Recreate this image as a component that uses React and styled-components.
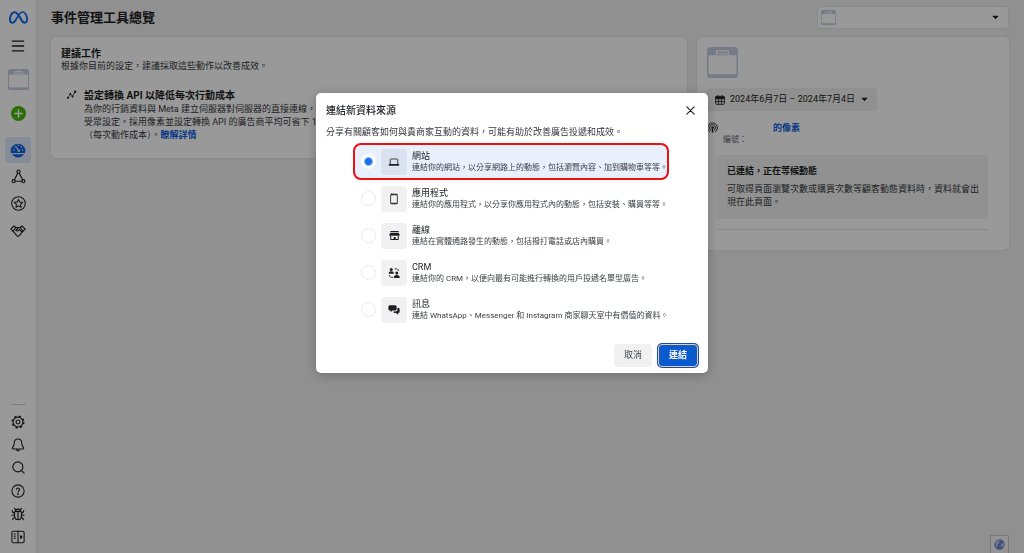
import React, { useState } from 'react';
import styled, { createGlobalStyle } from 'styled-components';
import { FaMeta } from 'react-icons/fa6';
import { Search } from 'lucide-react';

const GlobalStyle = createGlobalStyle`
  * {
    box-sizing: border-box;
  }

  body {
    margin: 0;
    background: #f0f0f0;
    color: #1c1e21;
    font-family: Roboto, 'Noto Sans CJK TC', sans-serif;
    font-size: 9px;
    line-height: 13px;
  }

  button,
  input {
    font: inherit;
    color: inherit;
    margin: 0;
  }

  h1, h2, h3, p {
    margin: 0;
  }

  svg {
    display: block;
    flex-shrink: 0;
  }
`;

const Page = styled.div`
  display: flex;
  min-height: 100vh;
`;

const Sidebar = styled.nav`
  display: flex;
  flex-direction: column;
  align-items: center;
  width: 36px;
  padding: 4px 0 5px;
  background: #fff;
  box-shadow: 1px 0 1px #e2e3e5;
`;

const NavButton = styled.button`
  display: flex;
  align-items: center;
  justify-content: center;
  width: 26px;
  height: ${({ $height }) => $height || 27}px;
  padding: 0;
  border: none;
  border-radius: 4px;
  background: ${({ $active }) => ($active ? '#dfeafc' : 'none')};
  cursor: pointer;
`;

const NavGroup = styled.div`
  display: flex;
  flex-direction: column;
  align-items: center;
  margin-top: ${({ $bottom }) => ($bottom ? 'auto' : '7px')};
`;

const NavLine = styled.hr`
  width: 15px;
  margin: 0 0 5px;
  border: none;
  border-top: 1px solid #d0d2d5;
`;

const Main = styled.main`
  flex: 1;
  min-width: 0;
  padding: 6px 15px;
`;

const Header = styled.header`
  display: flex;
  align-items: center;
  justify-content: space-between;
  height: 23px;
  margin-bottom: 8px;
`;

const PageTitle = styled.h1`
  font-size: 13px;
  line-height: 18px;
  font-weight: 700;
`;

const AccountSelect = styled.button`
  display: flex;
  align-items: center;
  justify-content: space-between;
  width: 192px;
  height: 23px;
  padding: 0 9px 0 3px;
  border: 1px solid #e4e6e9;
  border-radius: 4px;
  background: #fff;
`;

const Columns = styled.div`
  display: grid;
  grid-template-columns: minmax(0, 1fr) 312px;
  align-items: start;
  gap: 10px;
`;

const Card = styled.section`
  padding: 10px;
  border-radius: 5px;
  background: #fff;
  box-shadow: 0 0 2px rgba(0, 0, 0, 0.16);
`;

const CardTitle = styled.h2`
  font-size: 10px;
  line-height: 13px;
  font-weight: 700;
`;

const BodyText = styled.p`
  color: #33373b;
`;

const Task = styled.article`
  display: flex;
  gap: 7px;
  padding: 16px 5px 6px;
`;

const TaskText = styled(BodyText)`
  margin-top: 1px;
  white-space: nowrap;
`;

const Link = styled.a`
  color: #0a5fe0;
  font-weight: 700;
  text-decoration: none;
`;

const DateButton = styled.button`
  display: flex;
  align-items: center;
  gap: 5px;
  height: 23px;
  margin: 10px 0 11px;
  padding: 0 9px 0 8px;
  border: none;
  border-radius: 4px;
  background: #f0f0f0;
  white-space: nowrap;

  svg:last-child {
    margin-left: 1px;
  }
`;

const PixelRow = styled.div`
  display: flex;
  gap: 5px;
`;

const PixelName = styled.div`
  padding-left: 50px;
`;

const PixelId = styled.div`
  font-size: 8px;
  line-height: 10px;
  color: #606468;
`;

const StatusBox = styled.div`
  margin: 10px 11px 10px 10px;
  padding: 10px 8px 10px 10px;
  border-radius: 4px;
  background: #f2f2f2;
`;

const StatusTitle = styled.h3`
  margin-bottom: 5px;
  font-size: 9px;
  font-weight: 700;
`;

const Divider = styled.hr`
  margin: 0 11px 10px 10px;
  border: none;
  border-top: 1px solid #e2e3e5;
`;

const Globe = styled.button`
  position: fixed;
  right: 15px;
  bottom: 0;
  display: flex;
  align-items: center;
  justify-content: center;
  width: 19px;
  height: 18px;
  padding: 0;
  border: 1px solid #c8cacd;
  border-bottom: none;
  background: #f5f6f7;
`;

const Overlay = styled.div`
  position: fixed;
  inset: 0;
  display: flex;
  align-items: flex-start;
  justify-content: center;
  padding-top: 93px;
  background: rgba(0, 0, 0, 0.4);
`;

const Dialog = styled.form`
  width: 392px;
  padding: 10px 10px 6px;
  border-radius: 5px;
  background: #fff;
  box-shadow: 0 2px 12px rgba(0, 0, 0, 0.25);
`;

const DialogHeader = styled.div`
  display: flex;
  align-items: center;
  justify-content: space-between;
  margin-bottom: 8px;
`;

const DialogTitle = styled.h2`
  font-size: 10px;
  line-height: 13px;
  font-weight: 500;
`;

const CloseButton = styled.button`
  display: flex;
  padding: 3px;
  border: none;
  background: none;
  cursor: pointer;
`;

const OptionList = styled.div`
  margin: 4px 29px 16px 27px;
`;

const Option = styled.label`
  display: flex;
  align-items: center;
  height: 37px;
  padding-left: 8px;
  border-radius: 8px;
  background: ${({ $selected }) => ($selected ? '#e8effd' : 'none')};
  outline: ${({ $selected }) => ($selected ? '2px solid #ee1111' : 'none')};
  outline-offset: -2px;
  cursor: pointer;
`;

const Radio = styled.input`
  appearance: none;
  width: 15px;
  height: 15px;
  border: 1px solid #e8eaec;
  border-radius: 50%;
  background: #fff;

  &:checked {
    border-color: #fff;
    background: radial-gradient(circle, #1771ed 3px, #fff 5px);
  }
`;

const OptionIcon = styled.span`
  display: flex;
  align-items: center;
  justify-content: center;
  width: 26px;
  height: 26px;
  margin: 0 5px;
  border-radius: 4px;
  background: ${({ $selected }) => ($selected ? '#dae2f1' : '#f1f1f1')};
`;

const OptionText = styled.span`
  display: flex;
  flex-direction: column;
  white-space: nowrap;
  line-height: 12px;
`;

const OptionHint = styled.small`
  font-size: 8px;
  line-height: 11px;
  color: #3a3e42;
`;

const Footer = styled.div`
  display: flex;
  justify-content: flex-end;
  gap: 6px;
`;

const Button = styled.button`
  height: 23px;
  padding: 0 10px;
  border: none;
  border-radius: 4px;
  background: #f1f1f1;
  color: #44484c;
  cursor: pointer;
`;

const PrimaryButton = styled(Button)`
  border: 1px solid #f2cf8c;
  background: #0a5bd0;
  color: #fff;
  font-weight: 700;
  box-shadow: 0 0 0 1px #0a4bd0;
`;

const Icon = ({ size = 14, children, ...rest }) => (
  <svg
    width={size}
    height={size}
    viewBox="0 0 16 16"
    fill="none"
    stroke="currentColor"
    strokeWidth="1.2"
    strokeLinecap="round"
    strokeLinejoin="round"
    aria-hidden="true"
    {...rest}
  >
    {children}
  </svg>
);

const Briefcase = ({ size }) => (
  <svg width={size} height={size} viewBox="0 0 32 32" aria-hidden="true">
    <rect width="32" height="32" rx="4" fill="#c3cbe2" />
    <path d="M1.500 8.500h29V27q0 1-1 1h-27q-1 0-1-1z" fill="#fff" />
    <path d="M10 8.500V4h12v4.500" fill="none" stroke="#fff" strokeWidth="1.500" />
    <path d="M11 7h10" stroke="#fff" strokeWidth="1" />
  </svg>
);

const Caret = () => (
  <svg width="7" height="5" viewBox="0 0 8 5" aria-hidden="true">
    <path d="M1 .5h6q.7 0 .2.6L4.500 4q-.5.5-1 0L.8 1.100Q.3.500 1 .5z" fill="currentColor" />
  </svg>
);

const GaugeIcon = () => (
  <svg width="16" height="16" viewBox="0 0 16 16" aria-hidden="true">
    <path d="M1 11a7.300 7.300 0 1 1 14 0z" fill="#0a64e0" />
    <path d="M1.900 12.200h12.200a7.400 7.400 0 0 1-12.200 0z" fill="#0a64e0" />
    <g fill="#dfeafc">
      <circle cx="3.600" cy="8" r=".8" />
      <circle cx="5" cy="4.700" r=".8" />
      <circle cx="8.200" cy="3.200" r=".8" />
      <circle cx="11.300" cy="4.700" r=".8" />
      <circle cx="12.600" cy="8" r=".8" />
      <circle cx="8.800" cy="8.700" r="1.300" />
    </g>
    <path d="M8.600 8.400 6.200 5.200" stroke="#dfeafc" strokeWidth="1.100" strokeLinecap="round" />
  </svg>
);

const PlusIcon = () => (
  <svg width="15" height="15" viewBox="0 0 16 16" aria-hidden="true">
    <circle cx="8" cy="8" r="8" fill="#45b80c" />
    <path d="M8 4v8M4 8h8" stroke="#fff" strokeWidth="1.600" strokeLinecap="round" />
  </svg>
);

const NodesIcon = () => (
  <Icon size={15}>
    <circle cx="8" cy="2.800" r="1.700" />
    <circle cx="2.800" cy="13" r="1.700" />
    <circle cx="13.200" cy="13" r="1.700" />
    <path d="M7.200 4.400 3.600 11.400M8.800 4.400l3.600 7M4.600 13h6.800" />
  </Icon>
);

const StarIcon = () => (
  <Icon size={15} strokeWidth="1.100">
    <circle cx="8" cy="8" r="7.200" />
    <path d="m8 3.600 1.350 2.750 3.050.45-2.200 2.150.5 3.050L8 10.550 5.300 12l.5-3.050L3.600 6.800l3.050-.45z" />
  </Icon>
);

const HandshakeIcon = () => (
  <Icon size={16} strokeWidth="1.100">
    <path d="M.8 6.200 4 3l2 1.500-3 3.700zM15.200 6.200 12 3l-2 1.500 3 3.700z" />
    <path d="M6 4.500h4M3 8.200l4 4.600q1 .9 2 0l4-4.600M8.600 4.500 6 7.100q.8 1.300 2.400.3l1-.9 2.800 2.800" />
  </Icon>
);

const GearIcon = () => (
  <Icon>
    <circle cx="8" cy="8" r="5.600" />
    <circle cx="8" cy="8" r="2.200" />
    <circle cx="8" cy="8" r="6.700" strokeWidth="1.500" strokeDasharray="2.630 2.630" strokeLinecap="butt" />
  </Icon>
);

const BellIcon = () => (
  <Icon>
    <path d="M8 1.200c-3 0-4.300 2-4.300 4.600 0 3-.9 4-2 5.200-.6.700-.2 1.500.6 1.500h11.400c.8 0 1.200-.8.600-1.500-1.100-1.200-2-2.200-2-5.200 0-2.600-1.300-4.600-4.300-4.600zM6.200 12.800q.4 2 1.800 2t1.800-2" />
  </Icon>
);

const HelpIcon = () => (
  <Icon>
    <circle cx="8" cy="8" r="7" />
    <path d="M6.100 6.300q.2-1.800 2-1.800 1.800.1 1.800 1.700 0 1-1 1.500-.9.500-.9 1.400" />
    <circle cx="8" cy="11.300" r=".4" fill="currentColor" />
  </Icon>
);

const BugIcon = () => (
  <Icon strokeWidth="1.300">
    <path d="M5.200 5q.2-2.600 2.800-2.600T10.800 5M4 5.500q4-1.200 8 0v4.700q0 4.300-4 4.300t-4-4.300zM8 5.200v9" />
    <path d="M5.200 3 4 1.500M10.800 3 12 1.500M4 7.200 1.800 5.800 1.500 4.200M12 7.200l2.200-1.400.3-1.600M4 9.400H1M12 9.400h3M4.400 11.700 2.300 13 2 14.500M11.600 11.700l2.100 1.300.3 1.500" />
  </Icon>
);

const PanelIcon = () => (
  <Icon>
    <rect x="1" y="1.500" width="14" height="13" rx="1.600" />
    <path d="M8 1.500v13" />
    <path d="M3.400 4.600h1.800M3.400 7h1.800M3.400 9.400h1.800" strokeWidth="1" />
    <path d="m11 6.500 1.600 1.500L11 9.500z" fill="currentColor" />
  </Icon>
);

const SparkIcon = () => (
  <Icon size={11}>
    <path d="m3 12.500 3.500-5 3 3L13 4.500" strokeDasharray="2.500 1" />
    <g fill="currentColor" stroke="none">
      <circle cx="2.800" cy="12.700" r="1.500" />
      <circle cx="6.300" cy="7.300" r="1.500" />
      <circle cx="9.600" cy="11" r="1.500" />
      <circle cx="13.300" cy="4" r="1.700" />
    </g>
  </Icon>
);

const CalendarIcon = () => (
  <Icon size={10} strokeWidth="1.300">
    <rect x="1" y="2" width="14" height="13" rx="2" />
    <path d="M1 3h14v3H1z" fill="currentColor" />
    <path d="M4.500.8v2M11.500.8v2M1 10.500h14M5.700 6v9M10.300 6v9" />
  </Icon>
);

const BroadcastIcon = () => (
  <Icon size={11} strokeWidth="1.400">
    <path d="M4 14.500A7.200 7.200 0 1 1 12 14.500M5 11.500a4.300 4.300 0 1 1 6 0" />
    <circle cx="8" cy="8.300" r="1.300" fill="currentColor" />
    <path d="M8 11.500v3" strokeWidth="2.300" />
  </Icon>
);

const LaptopIcon = () => (
  <Icon size={12}>
    <path d="M3 11V5q0-1 1-1h8q1 0 1 1v6" strokeWidth="1.100" />
    <path d="M1 10.500h14v1.300q0 1.200-1.200 1.200H2.200Q1 13 1 11.800z" fill="currentColor" stroke="none" />
  </Icon>
);

const PhoneIcon = () => (
  <Icon size={12}>
    <rect x="3.500" y="1.500" width="9" height="13" rx="1.500" strokeWidth="1.100" />
    <path d="M4 2.300h8M4 13.700h8" strokeWidth="1.500" />
  </Icon>
);

const StoreIcon = () => (
  <Icon size={11} stroke="none" fill="currentColor">
    <path d="M2 1.500h12v1.800H2zM1.500 4.300h13l1 3.200q0 1-1 1h-13q-1 0-1-1z" />
    <path d="M1.800 8h1.400v5h3.600v-3h3v3h3V8h1.400v5.500q0 1-1 1H2.800q-1 0-1-1z" />
  </Icon>
);

const PeopleIcon = () => (
  <Icon size={12} stroke="none" fill="currentColor">
    <circle cx="4.300" cy="3.200" r="2" />
    <path d="M.8 9q0-3.300 3.500-3.300T7.800 9z" />
    <circle cx="11.700" cy="8" r="2" />
    <path d="M7.700 14.500q0-3.800 4-3.800t4 3.800z" />
    <path d="M9.500 2.500q3.500-.8 4.500 2.500M6 13.800Q3 14.500 2 11.300" fill="none" stroke="currentColor" strokeDasharray="2 1.500" />
  </Icon>
);

const ChatIcon = () => (
  <Icon size={12} stroke="none" fill="currentColor">
    <path d="M2.500 1.500h7q2 0 2 2v3.300q0 2-2 2H6L3.500 11V8.800H2.500q-2 0-2-2V3.500q0-2 2-2z" />
    <path d="M12.600 5h.9q2 0 2 2v3q0 2-2 2v2.500L10.800 12H9q-1.800 0-2-2h3q2.600 0 2.600-2.700z" />
  </Icon>
);

const CloseIcon = () => (
  <Icon size={9} strokeWidth="2">
    <path d="m1.500 1.500 13 13M14.500 1.500l-13 13" />
  </Icon>
);

const GlobeIcon = () => (
  <svg width="11" height="11" viewBox="0 0 16 16" aria-hidden="true">
    <circle cx="8" cy="8" r="7.500" fill="#6385cc" />
    <path d="M2 4q3-3.500 6-3l1 2-2 1 1 2-3 2 1 3-2 1Q1 9 2 4zM10 7l4-2 1 4-3 4-2-2z" fill="#b4c2e0" />
  </svg>
);

const options = [
  { id: 'web', title: '網站', hint: '連結你的網站，以分享網路上的動態，包括瀏覽內容、加到購物車等等。', icon: LaptopIcon },
  { id: 'app', title: '應用程式', hint: '連結你的應用程式，以分享你應用程式內的動態，包括安裝、購買等等。', icon: PhoneIcon },
  { id: 'offline', title: '離線', hint: '連結在實體通路發生的動態，包括撥打電話或店內購買。', icon: StoreIcon },
  { id: 'crm', title: 'CRM', hint: '連結你的 CRM，以便向最有可能進行轉換的用戶投遞名單型廣告。', icon: PeopleIcon },
  { id: 'message', title: '訊息', hint: '連結 WhatsApp、Messenger 和 Instagram 商家聊天室中有價值的資料。', icon: ChatIcon }
];

const ConnectDialog = () => {
  const [source, setSource] = useState('web');

  return (
    <Overlay>
      <Dialog role="dialog" aria-labelledby="dialog-title" onSubmit={(e) => e.preventDefault()}>
        <DialogHeader>
          <DialogTitle id="dialog-title">連結新資料來源</DialogTitle>
          <CloseButton type="button" aria-label="關閉">
            <CloseIcon />
          </CloseButton>
        </DialogHeader>
        <BodyText>分享有關顧客如何與貴商家互動的資料，可能有助於改善廣告投遞和成效。</BodyText>

        <OptionList>
          {options.map(({ id, title, hint, icon: OptionGlyph }) => (
            <Option key={id} $selected={source === id}>
              <Radio
                type="radio"
                name="source"
                value={id}
                checked={source === id}
                onChange={() => setSource(id)}
              />
              <OptionIcon $selected={source === id}>
                <OptionGlyph />
              </OptionIcon>
              <OptionText>
                {title}
                <OptionHint>{hint}</OptionHint>
              </OptionText>
            </Option>
          ))}
        </OptionList>

        <Footer>
          <Button type="button">取消</Button>
          <PrimaryButton type="submit">連結</PrimaryButton>
        </Footer>
      </Dialog>
    </Overlay>
  );
};

const App = () => (
  <>
    <GlobalStyle />
    <Page lang="zh-Hant">
      <Sidebar>
        <NavButton aria-label="Meta"><FaMeta size={19} color="#0a6cf0" /></NavButton>
        <NavButton aria-label="選單" $height={30}>
          <Icon><path d="M1.500 2.500h13M1.500 8h13M1.500 13.500h13" strokeWidth="1.500" /></Icon>
        </NavButton>
        <NavButton aria-label="帳號" $height={36}><Briefcase size={21} /></NavButton>
        <NavButton aria-label="建立" $height={33}><PlusIcon /></NavButton>
        <NavGroup>
          <NavButton aria-label="總覽" $active $height={26}><GaugeIcon /></NavButton>
          <NavButton aria-label="資料集"><NodesIcon /></NavButton>
          <NavButton aria-label="自訂轉換"><StarIcon /></NavButton>
          <NavButton aria-label="合作夥伴"><HandshakeIcon /></NavButton>
        </NavGroup>
        <NavGroup $bottom>
          <NavLine />
          <NavButton aria-label="設定" $height={23}><GearIcon /></NavButton>
          <NavButton aria-label="通知" $height={23}><BellIcon /></NavButton>
          <NavButton aria-label="搜尋" $height={23}><Search size={15} strokeWidth={1.8} /></NavButton>
          <NavButton aria-label="說明" $height={23}><HelpIcon /></NavButton>
          <NavButton aria-label="回報問題" $height={23}><BugIcon /></NavButton>
          <NavButton aria-label="展開" $height={23}><PanelIcon /></NavButton>
        </NavGroup>
      </Sidebar>

      <Main>
        <Header>
          <PageTitle>事件管理工具總覽</PageTitle>
          <AccountSelect type="button" aria-label="選擇帳號">
            <Briefcase size={15} />
            <Caret />
          </AccountSelect>
        </Header>

        <Columns>
          <Card>
            <CardTitle>建議工作</CardTitle>
            <BodyText>根據你目前的設定，建議採取這些動作以改善成效。</BodyText>
            <Task>
              <SparkIcon />
              <div>
                <CardTitle as="h3">設定轉換 API 以降低每次行動成本</CardTitle>
                <TaskText>
                  為你的行銷資料與 Meta 建立伺服器對伺服器的直接連線，
                  <br />
                  受眾設定。採用像素並設定轉換 API 的廣告商平均可省下 1
                  <br />
                  （每次動作成本）。<Link href="#details">瞭解詳情</Link>
                </TaskText>
              </div>
            </Task>
          </Card>

          <Card>
            <Briefcase size={31} />
            <DateButton type="button">
              <CalendarIcon />
              2024年6月7日 – 2024年7月4日
              <Caret />
            </DateButton>
            <PixelRow>
              <BroadcastIcon />
              <div>
                <PixelName><Link href="#pixel">的像素</Link></PixelName>
                <PixelId>編號：</PixelId>
              </div>
            </PixelRow>
            <StatusBox>
              <StatusTitle>已連結，正在等候動態</StatusTitle>
              <BodyText>可取得頁面瀏覽次數或購買次數等顧客動態資料時，資料就會出現在此頁面。</BodyText>
            </StatusBox>
            <Divider />
          </Card>
        </Columns>
      </Main>
      <Globe type="button" aria-label="語言"><GlobeIcon /></Globe>
    </Page>
    <ConnectDialog />
  </>
);

export default App;
